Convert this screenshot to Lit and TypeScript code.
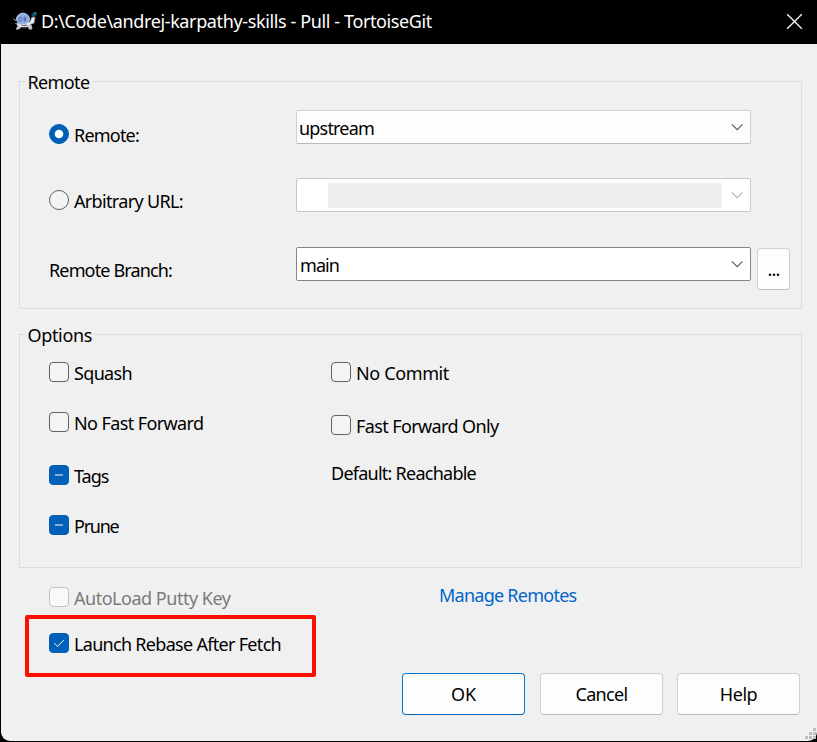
import { LitElement, html, css, svg } from "lit";
import { customElement, property, state } from "lit/decorators.js";
import { classMap } from "lit/directives/class-map.js";

/** One line of dialog text, tracked so that its advance equals `w` pixels. */
@customElement("ui-text")
class UiText extends LitElement {
  @property({ type: Number }) w = 0;
  @state() private tracking = 0;

  static styles = css`
    :host {
      display: block;
      flex: none;
      line-height: 24px;
      height: 24px;
      white-space: nowrap;
    }
    .line {
      display: inline-block;
    }
  `;

  firstUpdated() {
    const line = this.renderRoot.querySelector(".line") as HTMLElement;
    const count = (this.textContent || "").trim().length;
    if (this.w && count) {
      this.tracking = (this.w - line.getBoundingClientRect().width) / count;
    }
  }

  render() {
    return html`<span class="line" style="letter-spacing:${this.tracking}px"><slot></slot></span>`;
  }
}

type Mark = "off" | "on" | "mixed";

@customElement("ui-check")
class UiCheck extends LitElement {
  @property() kind: "check" | "radio" = "check";
  @property() mark: Mark = "off";
  @property({ type: Boolean }) disabled = false;
  @property({ type: Number }) w = 0;
  @property() label = "";

  static styles = css`
    :host {
      display: flex;
      align-items: flex-start;
      height: 20px;
    }
    .box {
      box-sizing: border-box;
      flex: none;
      width: 20px;
      height: 20px;
      border: 1px solid #626262;
      border-radius: 4px;
      background: #f4f4f4;
      margin-right: 5px;
    }
    .radio {
      border-radius: 50%;
    }
    .filled {
      border-color: #005fb8;
      background: #005fb8;
    }
    .dim {
      border-color: #c3c3c3;
      background: #f9f9f9;
    }
    .label {
      margin-top: -1px;
    }
    .faded {
      color: #7a7a7a;
    }
    svg {
      display: block;
      width: 18px;
      height: 18px;
    }
  `;

  private glyph() {
    if (this.mark === "off") return "";
    if (this.kind === "radio") return svg`<circle cx="9" cy="9" r="4.3" fill="#fff"/>`;
    if (this.mark === "mixed") return svg`<rect x="5" y="8" width="8" height="2" fill="#80afdb"/>`;
    return svg`<path d="M4.3 9.2 7.5 12.4 13.8 6.1" fill="none" stroke="#fff" stroke-width="1"/>`;
  }

  render() {
    const box = {
      box: true,
      radio: this.kind === "radio",
      filled: this.mark !== "off",
      dim: this.disabled,
    };
    return html`
      <span class=${classMap(box)}><svg viewBox="0 0 18 18">${this.glyph()}</svg></span>
      <ui-text class=${classMap({ label: true, faded: this.disabled })} .w=${this.w}>${this.label}</ui-text>
    `;
  }
}

@customElement("ui-combo")
class UiCombo extends LitElement {
  @property() value = "";
  @property({ type: Number }) w = 0;
  @property() look: "list" | "disabled" | "edit" = "list";

  static styles = css`
    :host {
      display: block;
      flex: none;
      width: 455px;
    }
    .field {
      box-sizing: border-box;
      display: flex;
      justify-content: space-between;
      height: 34px;
      border: 1px solid #d0d0d0;
      border-bottom-color: #bababa;
      border-radius: 2px;
      background: #fdfdfd;
      padding: 5px 6px 0 2px;
    }
    .disabled {
      border-color: #c8c8c8;
      background: #fff;
      padding: 4px 6px 0 31px;
    }
    .edit {
      border-color: #868686;
      background: #fff;
      padding-left: 3px;
    }
    .mask {
      width: 394px;
      height: 25px;
      background: #efefef;
    }
    svg {
      flex: none;
      width: 14px;
      height: 12px;
      margin-top: 5px;
    }
    .disabled svg {
      margin-top: 6px;
    }
    path {
      fill: none;
      stroke: #5c5c5c;
      stroke-width: 1.15;
    }
    .disabled path {
      stroke: #b5b5b5;
    }
  `;

  render() {
    return html`
      <div class="field ${this.look}">
        ${this.look === "disabled"
          ? html`<span class="mask"></span>`
          : html`<ui-text .w=${this.w}>${this.value}</ui-text>`}
        <svg viewBox="0 0 14 12"><path d="M1.9 3.4 7.2 8.7 12.5 3.4" /></svg>
      </div>
    `;
  }
}

@customElement("app-root")
class AppRoot extends LitElement {
  static styles = css`
    :host {
      display: block;
      width: 817px;
      height: 742px;
      background: #000;
      color: #000;
      font: 18px "Noto Sans", "Open Sans", sans-serif;
      overflow: hidden;
    }
    .window {
      box-sizing: border-box;
      display: flex;
      flex-direction: column;
      height: 742px;
      padding: 0 0 1px 1px;
    }
    .titlebar {
      box-sizing: border-box;
      display: flex;
      height: 44px;
      flex: none;
      padding: 9px 14px 0 12px;
      color: #fff;
    }
    .turtle {
      width: 24px;
      height: 20px;
      margin: 2px 4px 0 0;
    }
    .close {
      width: 17px;
      height: 17px;
      margin: 4px 0 0 auto;
    }
    .body {
      position: relative;
      box-sizing: border-box;
      flex: 1;
      background: #f0f0f0;
      border-radius: 0 0 9px 9px;
      padding: 37px 15px 0 18px;
    }
    .group {
      position: relative;
      box-sizing: border-box;
      border: 1px solid #dcdcdc;
    }
    .remote {
      height: 228px;
      padding: 28px 11px 0 29px;
      margin-bottom: 25px;
    }
    .options {
      height: 234px;
      padding: 27px 0 0 29px;
      display: grid;
      grid-template-columns: 282px 1fr;
    }
    .legend {
      position: absolute;
      left: 6px;
      top: -12px;
      padding: 0 2px 0 1.5px;
      background: #f0f0f0;
    }
    .row {
      display: grid;
      grid-template-columns: 247px 455px 33px;
      align-items: start;
      height: 68px;
    }
    .row.branch {
      margin-top: 1px;
      grid-template-columns: 247px 461px 33px;
    }
    .row ui-check {
      margin-top: 14px;
    }
    .row .second {
      margin-top: 12px;
    }
    .row .name {
      margin-top: 11px;
    }
    .column {
      display: flex;
      flex-direction: column;
    }
    .left {
      row-gap: 30px;
    }
    .left .tags {
      margin-top: 3px;
    }
    .right {
      row-gap: 33px;
    }
    .note {
      margin-top: -7px;
    }
    .footer {
      display: grid;
      grid-template-columns: 420px 1fr;
      align-items: start;
      height: 47px;
    }
    .footer ui-check {
      margin: 19px 0 0 30px;
    }
    .link {
      margin-top: 15px;
      color: #0066cc;
    }
    .callout {
      box-sizing: border-box;
      width: 291px;
      height: 62px;
      border: 4px solid #ff0f00;
      border-radius: 2px;
      margin-left: 6px;
      padding: 14px 0 0 20px;
    }
    .buttons {
      display: grid;
      grid-template-columns: 138px 137px 123px;
      justify-content: end;
      margin: -4px 2px 0 0;
    }
    .button {
      box-sizing: border-box;
      display: flex;
      justify-content: center;
      width: 123px;
      height: 42px;
      padding: 8px 0 0;
      border: 1px solid #d0d0d0;
      border-bottom-color: #bababa;
      border-radius: 4px;
      background: #fdfdfd;
    }
    .primary {
      border-color: #0078d4;
      border-bottom-color: #0067b8;
    }
    .more {
      width: 33px;
      margin-top: 1px;
    }
    .grip {
      position: absolute;
      right: 0;
      bottom: 1px;
      width: 12px;
      height: 12px;
      fill: #bfbfbf;
    }
  `;

  private turtle() {
    return html`<svg class="turtle" viewBox="0 0 24 20">
      <path d="M3 9.500 0.500 8M6 14 3 18h3l3-3M15 14l1 4h3l-1-4" fill="#c9c9c9" stroke="#b9b9b9" />
      <path d="M2.5 12.5 6 14h10l5-2 1-6h-3l-2 5z" fill="#eceef2" stroke="#9aa0aa" stroke-width=".7" />
      <ellipse cx="10" cy="8" rx="6.4" ry="5.8" fill="#93aee6" stroke="#bccdf4" />
      <path d="M7.2 6.2c2-1.6 2 4 0 4.2-2 .2-1.8-3 0-4.2M11.2 5.5v5M12.8 6.300v4" fill="none" stroke="#4a60a0" stroke-width="1" />
      <path d="M18.5 5V2.5L21 1h2v4h-2l-1 2z" fill="#124d68" />
      <path d="M21.5 1.5h1.500v2" fill="none" stroke="#2e87a5" />
      <path d="M4 13.500 9 15.500h5l3-3" fill="none" stroke="#e6e6e6" stroke-width="1.5" />
      <path d="M9 17h5" stroke="#383838" />
    </svg>`;
  }

  render() {
    return html`
      <div class="window">
        <div class="titlebar">
          ${this.turtle()}
          <ui-text .w=${391}>D:\\Code\\andrej-karpathy-skills - Pull - TortoiseGit</ui-text>
          <svg class="close" viewBox="0 0 17 17">
            <path d="M1.2 1.2 15.8 15.8M15.8 1.2 1.2 15.8" stroke="#fff" stroke-width="1.3" />
          </svg>
        </div>
        <div class="body">
          <div class="group remote">
            <ui-text class="legend" .w=${62}>Remote</ui-text>
            <div class="row">
              <ui-check kind="radio" mark="on" .w=${65} label="Remote:"></ui-check>
              <ui-combo value="upstream" .w=${75}></ui-combo>
            </div>
            <div class="row">
              <ui-check class="second" kind="radio" .w=${109} label="Arbitrary URL:"></ui-check>
              <ui-combo look="disabled"></ui-combo>
            </div>
            <div class="row branch">
              <ui-text class="name" .w=${123}>Remote Branch:</ui-text>
              <ui-combo look="edit" value="main" .w=${39}></ui-combo>
              <div class="button more"><ui-text .w=${12}>...</ui-text></div>
            </div>
          </div>
          <div class="group options">
            <ui-text class="legend" .w=${64.5}>Options</ui-text>
            <div class="column left">
              <ui-check .w=${58} label="Squash"></ui-check>
              <ui-check .w=${129.5} label="No Fast Forward"></ui-check>
              <ui-check class="tags" mark="mixed" .w=${34.5} label="Tags"></ui-check>
              <ui-check mark="mixed" .w=${44.5} label="Prune"></ui-check>
            </div>
            <div class="column right">
              <ui-check .w=${93} label="No Commit"></ui-check>
              <ui-check .w=${142.5} label="Fast Forward Only"></ui-check>
              <ui-text class="note" .w=${145}>Default: Reachable</ui-text>
            </div>
          </div>
          <div class="footer">
            <ui-check disabled .w=${156.5} label="AutoLoad Putty Key"></ui-check>
            <ui-text class="link" .w=${137.5}>Manage Remotes</ui-text>
          </div>
          <div class="callout">
            <ui-check mark="on" .w=${207} label="Launch Rebase After Fetch"></ui-check>
          </div>
          <div class="buttons">
            <div class="button primary"><ui-text .w=${25}>OK</ui-text></div>
            <div class="button"><ui-text .w=${52}>Cancel</ui-text></div>
            <div class="button"><ui-text .w=${37.5}>Help</ui-text></div>
          </div>
          <svg class="grip" viewBox="0 0 12 12">
            <path d="M8 0h3v3h-3zM4 4h3v3H4zM8 4h3v3H8zM0 8h3v3H0zM4 8h3v3H4zM8 8h3v3H8z" />
          </svg>
        </div>
      </div>
    `;
  }
}
